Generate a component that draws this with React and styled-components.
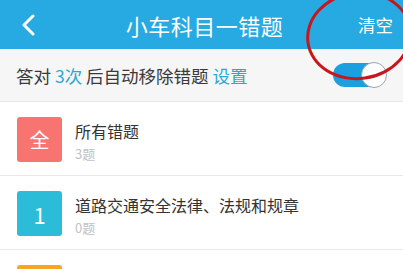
import React, { useState } from "react";
import styled, { createGlobalStyle } from "styled-components";

const GlobalStyle = createGlobalStyle`
  body {
    margin: 0;
    background: #ffffff;
    font-family: "Noto Sans CJK SC", "Noto Sans", sans-serif;
  }
`;

const Page = styled.div`
  position: relative;
  width: 403px;
  height: 269px;
  overflow: hidden;
  background: #ffffff;
`;

const Header = styled.div`
  height: 49px;
  background: #27a9e1;
  display: flex;
  align-items: center;
  justify-content: space-between;
  padding: 0 10px 0 20px;
  box-sizing: border-box;
  color: #ffffff;
`;

const BackButton = styled.div`
  width: 40px;
  display: flex;
  align-items: center;
`;

const Title = styled.div`
  font-size: 22px;
  letter-spacing: 0.5px;
  margin-left: 40px;
`;

const HeaderAction = styled.div`
  font-size: 17.5px;
  width: 84px;
  text-align: right;
`;

const SettingRow = styled.div`
  height: 53px;
  background: #f6f6f6;
  border-bottom: 1px solid #e6e6e6;
  display: flex;
  align-items: center;
  justify-content: space-between;
  padding: 0 18px 0 16px;
  box-sizing: border-box;
`;

const SettingText = styled.div`
  font-size: 17.5px;
  color: #3a3a3a;
  white-space: pre;
`;

const Accent = styled.span`
  color: #2aa8d2;
`;

const Track = styled.div`
  width: 52px;
  height: 24px;
  border-radius: 12px;
  background: #1b9fe0;
  position: relative;
`;

const Knob = styled.div`
  position: absolute;
  right: -2px;
  top: -1px;
  width: 24px;
  height: 24px;
  border-radius: 50%;
  background: #ffffff;
  border: 1px solid #9aa6ad;
`;

const List = styled.div`
  display: flex;
  flex-direction: column;
`;

const Row = styled.div`
  height: 74px;
  border-bottom: 1px solid #e8e8e8;
  display: flex;
  align-items: flex-start;
  padding: 15px 0 0 17px;
  box-sizing: border-box;
  gap: 13px;
`;

const Badge = styled.div`
  width: 45px;
  height: 45px;
  border-radius: 3px;
  background: ${(p) => p.$color};
  color: #ffffff;
  font-size: ${(p) => (p.$digit ? "22px" : "20px")};
  display: flex;
  align-items: center;
  justify-content: center;
  flex-shrink: 0;
`;

const RowText = styled.div`
  display: flex;
  flex-direction: column;
  padding-top: 2px;
`;

const RowTitle = styled.div`
  font-size: 16px;
  color: #333333;
  line-height: 24px;
`;

const RowCount = styled.div`
  font-size: 13px;
  color: #c2c2c2;
  line-height: 18px;
  margin-top: 2px;
`;

const Annotation = styled.div`
  position: absolute;
  left: 306px;
  top: -9px;
  width: 106px;
  height: 89px;
  border: 3px solid #c8161e;
  border-radius: 50%;
  box-sizing: border-box;
  transform: rotate(-8deg);
  pointer-events: none;
`;

const items = [
  { badge: "全", color: "#f87470", title: "所有错题", count: "3题" },
  { badge: "1", color: "#2bbdd8", title: "道路交通安全法律、法规和规章", count: "0题", digit: true },
  { badge: "2", color: "#f6a623", title: "道路通行条件", count: "0题", digit: true },
];

export default function App() {
  const [on] = useState(true);

  return (
    <Page>
      <GlobalStyle />
      <Header>
        <BackButton>
          <svg width="16" height="22" viewBox="0 0 16 22">
            <path d="M13 2 L4 11 L13 20" fill="none" stroke="#fff" strokeWidth="3" strokeLinecap="round" strokeLinejoin="round" />
          </svg>
        </BackButton>
        <Title>小车科目一错题</Title>
        <HeaderAction>清空</HeaderAction>
      </Header>
      <SettingRow>
        <SettingText>
          答对 <Accent>3次</Accent> 后自动移除错题 <Accent>设置</Accent>
        </SettingText>
        {on && (
          <Track>
            <Knob />
          </Track>
        )}
      </SettingRow>
      <List>
        {items.map((item) => (
          <Row key={item.title}>
            <Badge $color={item.color} $digit={item.digit}>
              {item.badge}
            </Badge>
            <RowText>
              <RowTitle>{item.title}</RowTitle>
              <RowCount>{item.count}</RowCount>
            </RowText>
          </Row>
        ))}
      </List>
      <Annotation />
    </Page>
  );
}
